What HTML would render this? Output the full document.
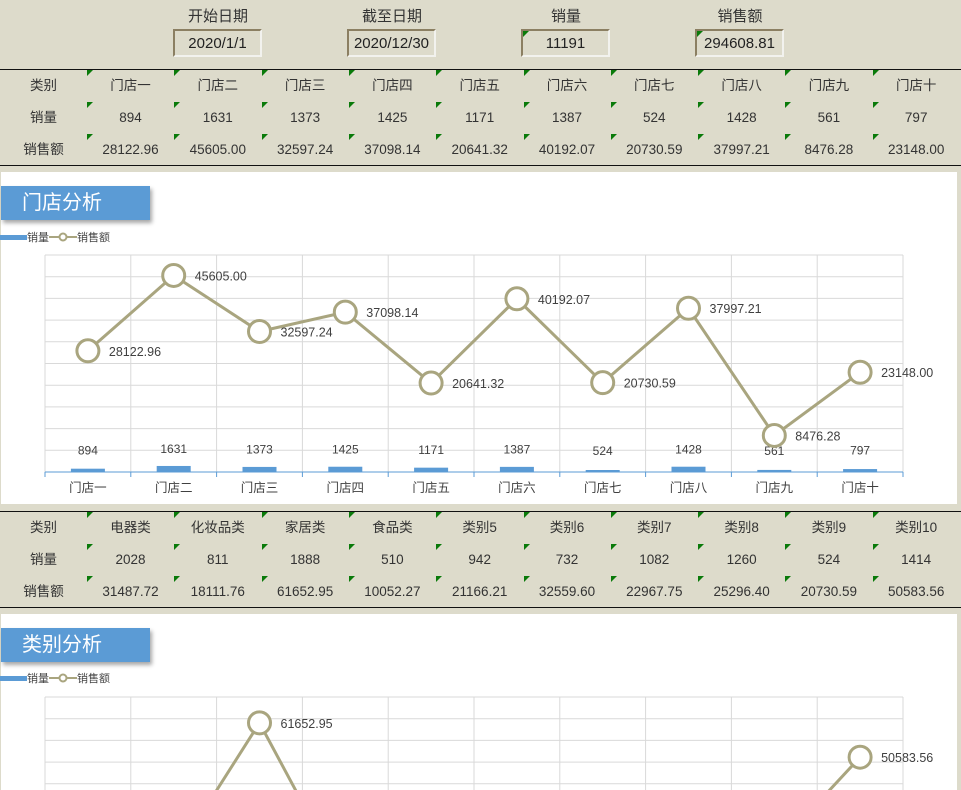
<!DOCTYPE html>
<html><head><meta charset="utf-8"><style>
*{margin:0;padding:0;box-sizing:border-box}
html,body{width:961px;height:790px;overflow:hidden}
body{background:#dddbcb;font-family:"Liberation Sans","Noto Sans CJK SC",sans-serif;color:#333;position:relative;font-size:13px}
.a{position:absolute}
.lbl{position:absolute;width:120px;text-align:center;font-size:15px;top:5px}
.box{position:absolute;top:29px;height:28px;width:89px;border-top:2px solid #8b7f62;border-left:2px solid #8b7f62;border-right:2px solid #f2f2ee;border-bottom:2px solid #f2f2ee;text-align:center;font-size:15px;line-height:25px;color:#222}
.tri{position:absolute;width:0;height:0;border-top:6px solid #0a7a0a;border-right:6px solid transparent}
.hl{position:absolute;left:0;width:961px;height:1px;background:#111}
.c{position:absolute;width:87px;text-align:center;line-height:32px;height:32px;font-size:13.5px}
.panel{position:absolute;left:1px;width:956px;background:#fff}
.title{position:absolute;left:1px;width:149px;height:34px;background:#5b9bd5;color:#fff;font-size:20px;line-height:34px;padding-left:21px;box-shadow:2px 3px 4px rgba(0,0,0,.35)}
.leg{position:absolute;left:0;font-size:11px;color:#444;height:12px;line-height:12px}
</style></head><body>
<div class="lbl" style="left:158px">开始日期</div>
<div class="lbl" style="left:332px">截至日期</div>
<div class="lbl" style="left:506px">销量</div>
<div class="lbl" style="left:680px">销售额</div>
<div class="box" style="left:173px">2020/1/1</div>
<div class="box" style="left:347px">2020/12/30</div>
<div class="box" style="left:521px">11191</div>
<div class="box" style="left:695px">294608.81</div>
<div class="tri" style="left:523px;top:31px"></div>
<div class="tri" style="left:697px;top:31px"></div>

<div class="hl" style="top:69px"></div>
<div class="hl" style="top:165px"></div>
<div id="t1"></div>

<div class="panel" style="top:172px;height:332px"></div>
<div class="title" style="top:186px">门店分析</div>
<div class="leg" style="top:232px"><span style="display:inline-block;width:27px;height:5px;background:#5b9bd5;vertical-align:middle;margin-top:-2px"></span>销量<svg width="28" height="10" style="vertical-align:middle;margin-top:-2px"><line x1="0" y1="5" x2="28" y2="5" stroke="#a9a57f" stroke-width="2"/><circle cx="14" cy="5" r="3.5" fill="#fff" stroke="#a9a57f" stroke-width="2"/></svg>销售额</div>

<div class="hl" style="top:511px"></div>
<div class="hl" style="top:607px"></div>
<div id="t2"></div>

<div class="panel" style="top:614px;height:176px"></div>
<div class="title" style="top:628px">类别分析</div>
<div class="leg" style="top:673px"><span style="display:inline-block;width:27px;height:5px;background:#5b9bd5;vertical-align:middle;margin-top:-2px"></span>销量<svg width="28" height="10" style="vertical-align:middle;margin-top:-2px"><line x1="0" y1="5" x2="28" y2="5" stroke="#a9a57f" stroke-width="2"/><circle cx="14" cy="5" r="3.5" fill="#fff" stroke="#a9a57f" stroke-width="2"/></svg>销售额</div>

<svg class="a" style="left:0;top:0" width="961" height="790" id="sv"></svg>

<script>
const C1=["门店一","门店二","门店三","门店四","门店五","门店六","门店七","门店八","门店九","门店十"];
const Q1=[894,1631,1373,1425,1171,1387,524,1428,561,797];
const S1=["28122.96","45605.00","32597.24","37098.14","20641.32","40192.07","20730.59","37997.21","8476.28","23148.00"];
const C2=["电器类","化妆品类","家居类","食品类","类别5","类别6","类别7","类别8","类别9","类别10"];
const Q2=[2028,811,1888,510,942,732,1082,1260,524,1414];
const S2=["31487.72","18111.76","61652.95","10052.27","21166.21","32559.60","22967.75","25296.40","20730.59","50583.56"];
function tbl(id,top,cats,q,s){
 let h='';const rows=[["类别",cats],["销量",q],["销售额",s]];
 rows.forEach((r,ri)=>{const y=top+1+ri*32;
  h+=`<div class="c" style="left:0;top:${y}px">${r[0]}</div>`;
  r[1].forEach((v,i)=>{const x=87+i*87.3;
   h+=`<div class="tri" style="left:${x}px;top:${y}px"></div><div class="c" style="left:${x}px;top:${y}px">${v}</div>`;});
 });
 document.getElementById(id).innerHTML=h;
}
tbl('t1',69,C1,Q1,S1);tbl('t2',511,C2,Q2,S2);
function chart(top,q,s,scale,qscale,cats){
 let g='';const L=45,R=903,B=top+217;
 for(let i=0;i<=10;i++){const y=top+i*21.7;g+=`<line x1="${L}" y1="${y}" x2="${R}" y2="${y}" stroke="#d9d9d9"/>`;}
 for(let i=0;i<=10;i++){const x=L+i*85.8;g+=`<line x1="${x}" y1="${top}" x2="${x}" y2="${B}" stroke="#d9d9d9"/>`;}
 g+=`<line x1="${L}" y1="${B}" x2="${R}" y2="${B}" stroke="#5b9bd5"/>`;
 for(let i=0;i<=10;i++){const x=L+i*85.8;g+=`<line x1="${x}" y1="${B}" x2="${x}" y2="${B+5}" stroke="#5b9bd5"/>`;}
 let pts=[];
 q.forEach((v,i)=>{const cx=L+42.9+i*85.8;const h=Math.max(2,v*qscale);
  g+=`<rect x="${cx-17}" y="${B-h}" width="34" height="${h}" fill="#5b9bd5"/>`;
  g+=`<text x="${cx}" y="${B-16-h/2}" font-size="12" text-anchor="middle" fill="#404040">${v}</text>`;
  if(cats)g+=`<text x="${cx}" y="${B+20}" font-size="12.5" text-anchor="middle" fill="#404040">${cats[i]}</text>`;
  pts.push([cx,B-parseFloat(s[i])*scale]);});
 g+=`<polyline points="${pts.map(p=>p.join(',')).join(' ')}" fill="none" stroke="#a9a57f" stroke-width="3"/>`;
 pts.forEach((p,i)=>{g+=`<circle cx="${p[0]}" cy="${p[1]}" r="11" fill="#fff" stroke="#a9a57f" stroke-width="3"/><text x="${p[0]+21}" y="${p[1]+5}" font-size="12.5" fill="#404040">${s[i]}</text>`;});
 return g;
}
document.getElementById('sv').innerHTML=chart(255,Q1,S1,0.00431,0.0037,C1)+chart(697,Q2,S2,0.0031,0.0037,null);
</script>
</body></html>
